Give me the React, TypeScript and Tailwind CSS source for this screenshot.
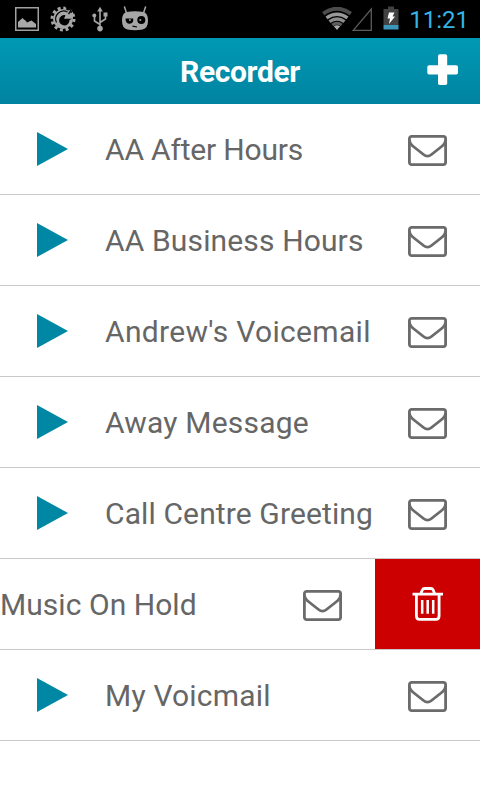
import React from 'react';

const recordings = [
  { id: 1, name: 'AA After Hours', tracking: 'tracking-[-0.18px]' },
  { id: 2, name: 'AA Business Hours', tracking: 'tracking-[0.14px]' },
  { id: 3, name: 'Andrew\'s Voicemail', tracking: 'tracking-[0.32px]' },
  { id: 4, name: 'Away Message', tracking: 'tracking-[0.2px]' },
  { id: 5, name: 'Call Centre Greeting', tracking: 'tracking-[0.12px]' },
  { id: 6, name: 'Music On Hold', tracking: 'tracking-[0.05px]', swiped: true },
  { id: 7, name: 'My Voicmail', tracking: 'tracking-[0.2px]' },
];

const GalleryIcon = () => (
  <svg width="24" height="24" viewBox="0 0 24 24">
    <rect x="0.75" y="0.75" width="22.5" height="22.5" fill="none" stroke="#a0a0a0" strokeWidth="1.5" />
    <path d="M3 20.500V15l4.500-4 1.500 1.500 1.500 1 1.500 2 4.500-2 4.500 3.500v3.500z" fill="#a8a8a8" />
  </svg>
);

const GearIcon = () => (
  <svg width="26" height="26" viewBox="0 0 26 26">
    <circle cx="13" cy="13" r="11" fill="none" stroke="#a6a6a6" strokeWidth="3" strokeDasharray="3 2.760" />
    <circle cx="13" cy="13" r="10" fill="#a6a6a6" />
    <path d="M17.500 6A8 8 0 0 0 6.500 16.500" fill="none" stroke="#000" strokeWidth="1.200" />
    <path d="M19.500 14A5.200 5.200 0 1 1 15.500 9.200L14 12.700h8L19.500 14z" fill="#000" />
    <path d="M17.300 10.500l5.700-5v6.500z" fill="#a6a6a6" />
    <path d="M15.500.5l5.500 4-2.500 3.500" fill="none" stroke="#000" strokeWidth="1.300" />
  </svg>
);

const UsbIcon = () => (
  <svg width="18" height="26" viewBox="0 0 18 26" fill="none" stroke="#a6a6a6" strokeWidth="1.600">
    <path d="M9 3v19M9 18.500l-5.500-3.500v-4.500M9 16.500l5.500-3.500V9" />
    <path d="M9 .8l2.800 4.700H6.200z" fill="#a6a6a6" stroke="none" />
    <circle cx="3.300" cy="9.500" r="2" fill="#a6a6a6" stroke="none" />
    <rect x="12.500" y="6.500" width="4" height="4" fill="#a6a6a6" stroke="none" />
    <circle cx="9" cy="22.600" r="2.800" fill="#a6a6a6" stroke="none" />
  </svg>
);

const CidIcon = () => (
  <svg width="28" height="26" viewBox="0 0 28 26">
    <path d="M3.500 1L5.500 7M24.500 1L22.500 7" stroke="#a6a6a6" strokeWidth="1.500" strokeLinecap="round" />
    <path d="M5.500 6Q14 4.500 22.500 6 27 7 27 14.500 27 22.500 21.500 23.500 14 24.800 6.500 23.500 1 22.500 1 14.500 1 7 5.500 6z" fill="#a6a6a6" />
    <path d="M4.500 12.500h7.700q.6 5-3.500 5.300-4.100 0-4.200-5.300z" fill="#000" />
    <circle cx="20.300" cy="14" r="4" fill="#000" />
    <circle cx="8.900" cy="14" r=".9" fill="#a6a6a6" />
    <circle cx="19.300" cy="14" r="1" fill="#a6a6a6" />
    <path d="M11.500 20.200l4.500.8" stroke="#000" strokeWidth="1.200" />
  </svg>
);

const WifiIcon = () => (
  <svg width="30" height="24" viewBox="0 0 30 24" fill="none" stroke="#8c8c8c" strokeWidth="3.400">
    <path d="M1.200 6.700Q15-3.200 28.800 6.700" stroke="#4c4c4c" strokeWidth="4" />
    <path d="M4.500 10.900Q15 3.600 25.500 10.900" stroke="#999" />
    <path d="M7.500 14.700Q15 9.400 22.500 14.700" />
    <path d="M10.400 18Q15 14.500 19.600 18" stroke="#5e5e5e" strokeWidth="3" />
    <path d="M11.800 19.300Q15 17 18.200 19.300L15 23z" fill="#aaa" stroke="none" />
  </svg>
);

const SignalIcon = () => (
  <svg width="21" height="24" viewBox="0 0 21 24">
    <path d="M1.200 23.300L19.300 2V23.300z" fill="none" stroke="#5c5c5c" strokeWidth="1.300" />
  </svg>
);

const BatteryIcon = () => (
  <svg width="16" height="24" viewBox="0 0 16 24">
    <path d="M.5 3H5V.5h6V3h4.500v16H.5z" fill="#424242" />
    <path d="M.5 19h15v4.500H.5z" fill="#3c96ba" />
    <path d="M6 6.500h5.500L9.500 10.500H12L6 18l1-5.500H4.500z" fill="#fff" />
  </svg>
);

const PlusIcon = () => (
  <svg width="32" height="32" viewBox="0 0 32 32" fill="#fff">
    <rect x="0.300" y="11.300" width="30.700" height="9.200" rx="1.800" />
    <rect x="11" y="0.300" width="9.200" height="30.700" rx="1.800" />
  </svg>
);

const PlayIcon = () => (
  <svg width="32" height="34" viewBox="0 0 32 34">
    <path d="M0 0L31 17 0 34z" fill="#0087a3" />
  </svg>
);

const MailIcon = () => (
  <svg width="40" height="32" viewBox="0 0 40 32" fill="none" stroke="#6b6b6b" strokeWidth="2.800">
    <rect x="1.400" y="1.400" width="36.200" height="28.200" rx="2.300" />
    <path d="M1.500 5C1.500 8.500 4 10.500 6 12L15.500 19.500Q19.500 22.800 23.500 19.500L33 12C35 10.500 37.500 8.500 37.500 5" />
  </svg>
);

const TrashIcon = () => (
  <svg width="32" height="34" viewBox="0 0 32 34" fill="none" stroke="#fff" strokeWidth="2.800">
    <path d="M0.500 7.200H31M8.700 7L10.300 3Q11 1.500 12.700 1.500H18.800Q20.500 1.500 21.200 3L22.800 7" />
    <path d="M4.400 7V28.700Q4.400 32.300 7.500 32.300H24Q27.100 32.300 27.100 28.700V7" />
    <path d="M10.200 13V26.700M15.700 13V26.700M21.200 13V26.700" strokeWidth="2.500" />
  </svg>
);

const StatusBar = () => (
  <div className="flex h-[38px] items-center justify-between bg-black pl-[15px] pr-[11px]">
    <div className="flex items-center">
      <GalleryIcon />
      <div className="ml-[11px]"><GearIcon /></div>
      <div className="ml-[15px]"><UsbIcon /></div>
      <div className="ml-3"><CidIcon /></div>
    </div>
    <div className="flex items-center">
      <WifiIcon />
      <SignalIcon />
      <div className="-mt-0.5 ml-2.5"><BatteryIcon /></div>
      <span className="ml-2.5 mt-0.5 text-[24px] leading-none text-[#33b5e5]">11:21</span>
    </div>
  </div>
);

const Header = () => (
  <header className="grid h-[66px] grid-cols-[1fr_auto_1fr] items-center bg-gradient-to-b from-[#0099b5] to-[#0083a0]">
    <h1 className="col-start-2 mt-0.5 text-[30px] font-bold leading-none tracking-[-0.35px]">Recorder</h1>
    <button className="mr-[21px] -mt-0.5 justify-self-end">
      <PlusIcon />
    </button>
  </header>
);

const App = () => {
  return (
    <div className="h-[800px] w-[480px] overflow-hidden bg-white font-['Roboto',sans-serif] text-white">
      <StatusBar />
      <Header />
      <ul>
        {recordings.map((item) => (
          <li key={item.id} className="flex h-[91px] items-center border-b border-[#c9c9c9] text-[#666]">
            {!item.swiped && (
              <div className="w-[105px] shrink-0 pl-[37px]">
                <PlayIcon />
              </div>
            )}
            <span className={`mt-0.5 flex-1 whitespace-nowrap text-[30px] leading-none ${item.tracking}`}>
              {item.name}
            </span>
            <div className="mr-8 mt-1">
              <MailIcon />
            </div>
            {item.swiped && (
              <button className="flex h-full w-[105px] items-center justify-center bg-[#cc0000]">
                <TrashIcon />
              </button>
            )}
          </li>
        ))}
      </ul>
    </div>
  );
};

export default App;
